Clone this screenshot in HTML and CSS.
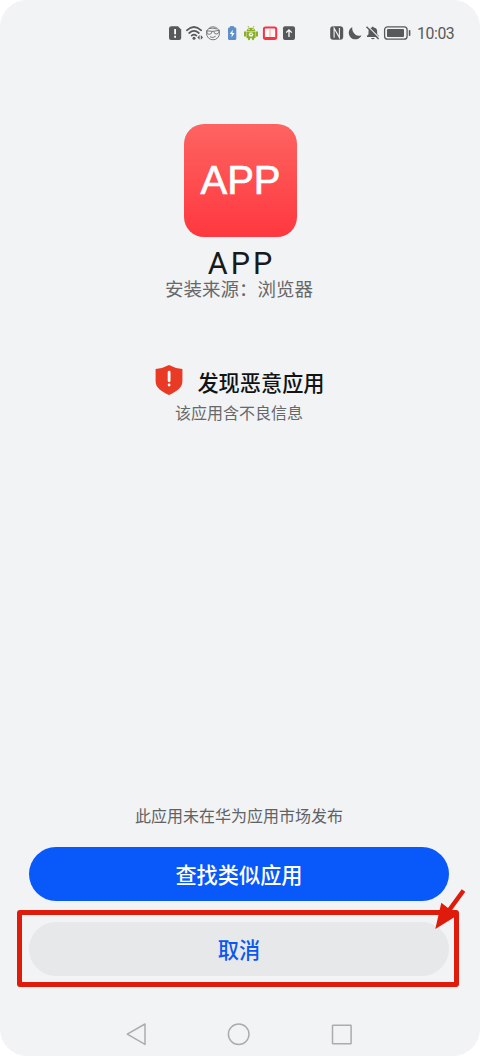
FILE: index.html
```html
<!DOCTYPE html>
<html lang="zh-CN">
<head>
<meta charset="utf-8">
<title>安装应用</title>
<link rel="stylesheet" href="styles.css">
</head>
<body>
<div class="screen">
  <header class="status-bar">
    <svg class="status-left" viewBox="0 0 130 16" width="130" height="16">
      <path fill="#58595b" d="M3.5 1.3H10L13.2 4.5V13a2 2 0 0 1-2 2H3a2 2 0 0 1-2-2V3.5Q1 1.3 3.5 1.3z"/>
      <path stroke="#fff" stroke-width="1.8" d="M7.1 4v5.2M7.1 10.8v1.9"/>
      <g fill="none" stroke="#58595b" stroke-width="1.7" stroke-linecap="round">
        <path d="M18.8 5.3Q26 -1.3 33.2 5.3M21.2 8Q26 3.8 30.8 8M23.6 10.6Q26 8.8 28.4 10.6"/>
      </g>
      <circle cx="26" cy="13.3" r="1.5" fill="#58595b"/>
      <path fill="#58595b" d="M31.6 10v4.800l-2.200-2.400zM32.8 10v4.800l2.200-2.400z"/>
      <g fill="none" stroke="#6b6c6e" stroke-width=".9">
        <circle cx="45" cy="8.300" r="6.500"/>
        <path d="M38.2 5.800Q45 7.200 51.800 5.200M38.5 6.300q.3 3.500 3.100 3 2.200-.3 2.400-2.800M45.700 6.500q.7 3 3.200 2.500 2.400-.5 2.500-3.200M42 11.800q3 1.700 5.700-.6M41 3.600q3.400-1 7.800.3"/>
      </g>
      <rect x="62" y="1" width="4" height="2" rx=".5" fill="#6697cf"/>
      <rect x="60" y="2.200" width="8.300" height="12.800" rx="1.500" fill="#5f8fc9"/>
      <path fill="#fff" d="M64.800 4.700 61.700 9h2.100l-.3 3.500 3.100-4.400h-2.100z"/>
      <path fill="#8caf28" d="M78.500 5.900a4.700 4.300 0 0 1 9 0zM78.400 6.500h9.200v5.700a1 1 0 0 1-1 1h-7.200a1 1 0 0 1-1-1z"/>
      <path stroke="#8caf28" stroke-width="2" stroke-linecap="round" d="M77 7.300v3.500M89 7.300v3.500M81 12v2.300M85 12v2.300"/>
      <path stroke="#8caf28" stroke-width=".8" d="m80 1 1 1.800M86 1l-1 1.800"/>
      <circle cx="81" cy="4.400" r=".6" fill="#fff"/><circle cx="85" cy="4.400" r=".6" fill="#fff"/>
      <circle cx="83" cy="9.500" r="2.300" fill="#edf4dc"/><path stroke="#667f27" stroke-width=".7" fill="none" d="m82 8.800 1 1 1.200-1.500"/>
      <rect x="95.900" y="2.400" width="12.300" height="11.600" rx="1.700" fill="#fff6f6" stroke="#f83442" stroke-width="2"/>
      <path stroke="#f9a4aa" stroke-width="1" d="M102 3v10"/><path stroke="#f83442" stroke-width="1.200" d="M97 12.700h10"/>
      <rect x="115" y="1.200" width="12" height="13.800" rx="2" fill="#58595b"/>
      <path fill="none" stroke="#fff" stroke-width="1.300" d="M121 12V5M118.200 7.600 121 4.800l2.800 2.800"/>
    </svg>
    <div class="status-right">
      <svg viewBox="0 0 82 16" width="82" height="16">
        <rect x=".2" y="1.200" width="13" height="13.600" rx="3" fill="#58595b"/>
        <path fill="none" stroke="#f1f3f5" stroke-width="1.100" d="M4.100 12.700V3.200l5.300 9.400V3.100"/>
        <path fill="#58595b" d="M22.300 1.900a6.600 6.600 0 1 0 9.200 8.300Q27 12.100 24 8.300 21.600 5 22.300 1.900z"/>
        <path fill="#58595b" d="M37 12v-1.200l1.500-1.500V6.800Q38.500 2.900 41.900 2.500q.9-2 1.800 0Q47.200 2.900 47.200 6.800v2.500l1.500 1.500V12zM40.900 12.900h3.900q-1.900 2.600-3.900 0z"/>
        <path stroke="#f1f3f5" stroke-width="1.300" d="M37.400 .9 49.300 12.900"/><path stroke="#58595b" stroke-width="1.400" d="M36.500 1.800 48.600 14"/>
        <rect x="54.600" y="1.800" width="22.500" height="12.400" rx="3" fill="none" stroke="#58595b" stroke-width="1.300"/>
        <rect x="57" y="4" width="17" height="8" rx="1" fill="#58595b"/>
        <path stroke="#58595b" stroke-width="1.600" stroke-linecap="round" d="M79.600 5.800v4.400"/>
      </svg>
      <time class="clock">10:03</time>
    </div>
  </header>

  <main class="content">
    <section class="app-info">
      <div class="app-icon">APP</div>
      <h1 class="app-name">APP</h1>
      <p class="app-source">安装来源：浏览器</p>
    </section>
    <section class="warning">
      <div class="warning-head">
        <svg viewBox="0 0 28 32" width="28" height="32">
          <path fill="#e83a25" d="M14 1q5.700 3.300 13.400 4v12.200c0 6.500-5.800 10.300-13.400 13.800C6.400 27.500.6 23.700.6 17.200V5Q8.300 4.300 14 1z"/>
          <path stroke="#fff" stroke-width="2.800" stroke-linecap="round" d="M14.100 8.200v8.600M14.100 21v.1"/>
        </svg>
        <h2 class="warning-title">发现恶意应用</h2>
      </div>
      <p class="warning-text">该应用含不良信息</p>
    </section>
  </main>

  <footer class="actions">
    <p class="notice">此应用未在华为应用市场发布</p>
    <button class="button primary">查找类似应用</button>
    <div class="highlight">
      <button class="button secondary">取消</button>
      <svg class="arrow" viewBox="0 0 34 42" width="34" height="42">
        <path fill="#df1b0b" d="m27.700 1.300 3.600 2.500-13.600 18.800 6.300 4.400L1.300 41 7.300 14.800l6.700 5.200z"/>
      </svg>
    </div>
  </footer>

  <nav class="nav-bar">
    <svg viewBox="0 0 22 24" width="22" height="24"><path d="M20 2v20.400L2.300 12.200z"/></svg>
    <svg viewBox="0 0 24 24" width="24" height="24"><circle cx="11.700" cy="12.200" r="10.300"/></svg>
    <svg viewBox="0 0 22 24" width="22" height="24"><rect x="1.500" y="3.200" width="18.600" height="18.600" rx=".5"/></svg>
  </nav>
</div>
</body>
</html>
```
FILE: styles.css
```css
* { box-sizing: border-box; }
body, h1, h2, p { margin: 0; }
body {
  background: #fff;
  font-family: Roboto, "Noto Sans CJK SC", sans-serif;
}
svg { display: block; flex: none; }
.screen {
  display: flex;
  flex-direction: column;
  width: 480px;
  height: 1056px;
  background: #f1f3f5;
  border-radius: 27px;
  overflow: hidden;
}
.status-bar {
  display: flex;
  justify-content: space-between;
  align-items: center;
  height: 66px;
  padding: 0 26px 0 168px;
}
.status-right { display: flex; align-items: center; gap: 5px; }
.clock {
  width: 37px;
  padding-top: 1px;
  color: #58595b;
  font-size: 15.8px;
  line-height: 18px;
  letter-spacing: -0.4px;
  white-space: nowrap;
}
.content {
  display: flex;
  flex: 1;
  flex-direction: column;
  align-items: center;
  padding-top: 58px;
}
.app-info { display: flex; flex-direction: column; align-items: center; }
.app-icon {
  display: flex;
  align-items: center;
  justify-content: center;
  width: 113px;
  height: 113px;
  margin-left: 1px;
  padding-bottom: 2px;
  border-radius: 20px;
  background: linear-gradient(#fd6461, #ff383f);
  color: #fff;
  font: 400 40px/48px "Liberation Sans", Arial, sans-serif;
  -webkit-text-stroke: 0.7px #fff;
}
.app-name {
  margin-top: 11px;
  padding-left: 3px;
  color: #17191b;
  font-size: 30.5px;
  font-weight: 400;
  line-height: 32px;
  letter-spacing: 3px;
}
.app-source {
  padding-right: 2px;
  color: #66686a;
  font-size: 18.5px;
  line-height: 20px;
}
.warning {
  display: flex;
  flex-direction: column;
  align-items: center;
  margin-top: 64px;
}
.warning-head { display: flex; gap: 14px; }
.warning-title {
  padding-top: 4px;
  color: #111315;
  font-size: 21.2px;
  font-weight: 500;
  line-height: 32px;
}
.warning-text {
  margin-top: 3px;
  padding-right: 2px;
  color: #66686a;
  font-size: 16px;
  line-height: 22px;
}
.actions {
  display: flex;
  flex-direction: column;
  align-items: center;
  padding-right: 2px;
}
.notice {
  margin-bottom: 19px;
  color: #606264;
  font-size: 16px;
  line-height: 22px;
}
.button {
  display: block;
  width: 420px;
  height: 54px;
  padding: 3px 0 0;
  border: 0;
  border-radius: 27px;
  font: 500 21.2px/51px Roboto, "Noto Sans CJK SC", sans-serif;
}
.primary { background: #0858fa; color: #fff; }
.secondary { background: #e6e8ea; color: #0c58ef; }
.highlight {
  position: relative;
  display: flex;
  align-items: center;
  justify-content: center;
  width: 442px;
  height: 77px;
  margin: 9px 2px 0 0;
  padding-left: 2px;
  border: 5px solid #df1b0b;
  border-radius: 3px;
}
.arrow { position: absolute; top: -27px; right: -14px; }
.nav-bar {
  display: flex;
  justify-content: space-between;
  height: 69px;
  padding: 35px 127px 0 125px;
}
.nav-bar svg { fill: none; stroke: #aaacae; stroke-width: 1.5; stroke-linejoin: round; }
```
